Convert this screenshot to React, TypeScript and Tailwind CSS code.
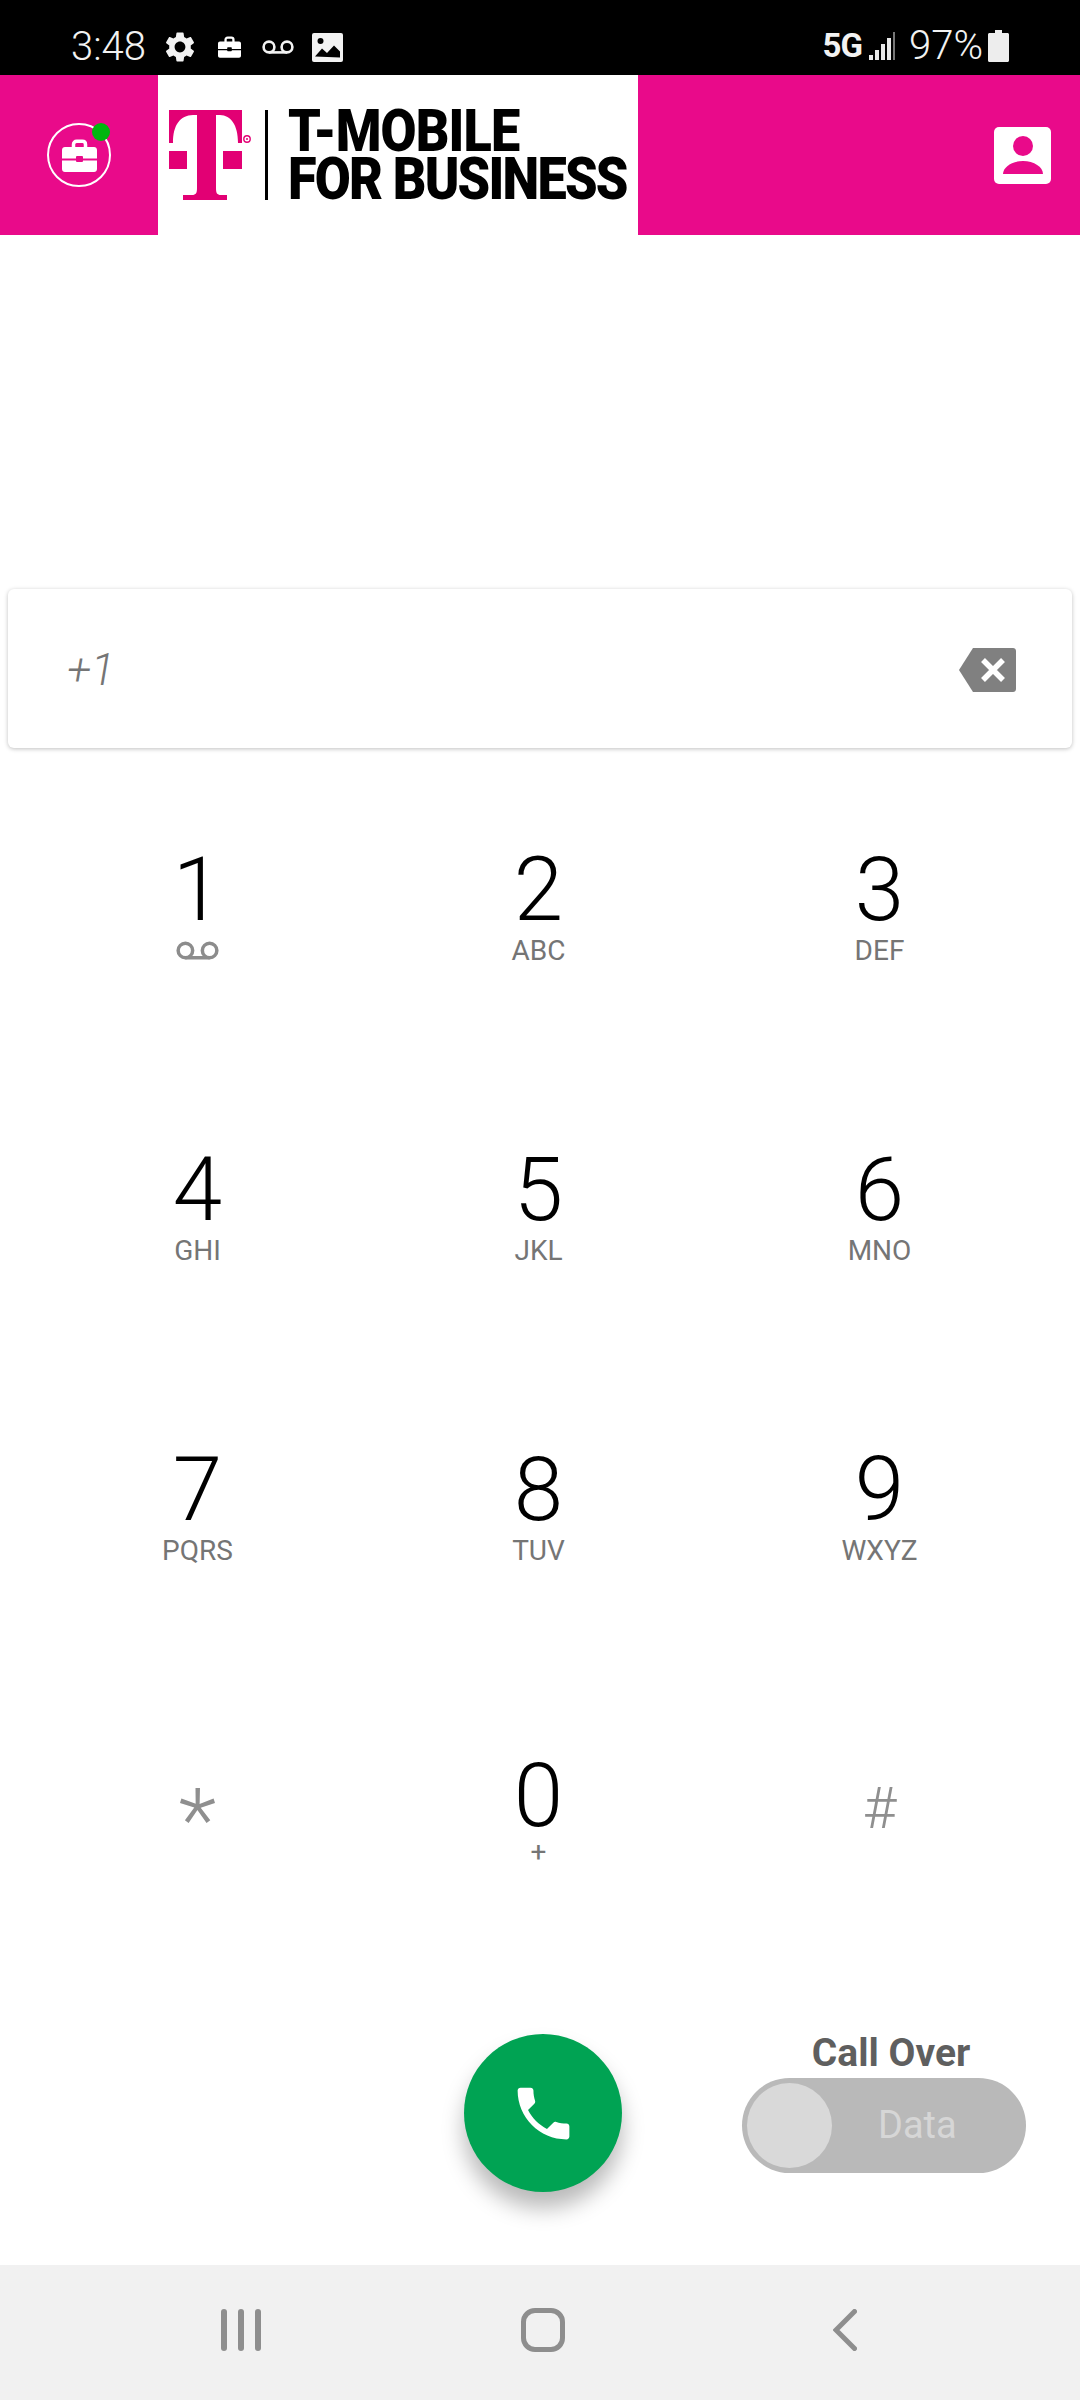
// App.tsx
const GRID_KEYS = [
  { digit: "1", sub: "" },
  { digit: "2", sub: "ABC" },
  { digit: "3", sub: "DEF" },
  { digit: "4", sub: "GHI" },
  { digit: "5", sub: "JKL" },
  { digit: "6", sub: "MNO" },
  { digit: "7", sub: "PQRS" },
  { digit: "8", sub: "TUV" },
  { digit: "9", sub: "WXYZ" },
];

const Voicemail = ({ className }: { className: string }) => (
  <svg viewBox="0 0 32 14" className={className} fill="none" stroke="currentColor" strokeWidth="2.6">
    <circle cx="7" cy="7" r="5.4" />
    <circle cx="25" cy="7" r="5.4" />
    <path d="M7 12.4h18" />
  </svg>
);

const Briefcase = ({ className, cut }: { className: string; cut: string }) => (
  <svg viewBox="0 0 35 33" className={className}>
    <path
      fill="none"
      stroke="#fff"
      strokeWidth="3.5"
      d="M11.5 9V5.5c0-2 1.2-3.2 3.2-3.2h5.6c2 0 3.2 1.2 3.2 3.2V9"
    />
    <path
      fill="#fff"
      d="M3 8h29c1.7 0 3 1.3 3 3v8.5H0V11c0-1.700 1.300-3 3-3zM0 21.500h35V30c0 1.700-1.300 3-3 3H3c-1.700 0-3-1.300-3-3z"
    />
    <rect x="14" y="17" width="7" height="6" rx="1" fill={cut} />
  </svg>
);

const StatusBar = () => (
  <div className="h-[75px] bg-black flex items-start justify-between pt-[29px] text-[#f2f2f2]">
    <div className="flex items-center pl-[71px]">
      <span className="text-[40px] leading-[34px] font-light w-[91px]">3:48</span>
      <svg viewBox="0 0 24 24" className="w-[36px] h-[36px]" fill="currentColor">
        <path d="M19.14 12.94c.04-.3.06-.61.06-.94 0-.32-.02-.64-.07-.94l2.03-1.58c.18-.14.23-.41.12-.61l-1.92-3.32c-.12-.22-.37-.29-.59-.22l-2.39.96c-.5-.38-1.03-.7-1.62-.94l-.36-2.54c-.04-.24-.24-.41-.48-.41h-3.84c-.24 0-.43.17-.47.41l-.36 2.54c-.59.24-1.13.57-1.62.94l-2.39-.96c-.22-.08-.47 0-.59.22L2.74 8.87c-.12.21-.08.47.12.61l2.03 1.58c-.05.3-.09.63-.09.94s.02.64.07.94l-2.03 1.58c-.18.14-.23.41-.12.61l1.92 3.32c.12.22.37.29.59.22l2.39-.96c.5.38 1.03.7 1.62.94l.36 2.54c.05.24.24.41.48.41h3.84c.24 0 .44-.17.47-.41l.36-2.54c.59-.24 1.13-.56 1.62-.94l2.39.96c.22.08.47 0 .59-.22l1.92-3.32c.12-.22.07-.47-.12-.61l-2.01-1.58zM12 15.6c-1.98 0-3.6-1.62-3.6-3.600s1.620-3.600 3.600-3.600 3.600 1.620 3.600 3.600-1.620 3.600-3.600 3.600z" />
      </svg>
      <Briefcase className="w-[23px] h-[22px] ml-[20px]" cut="#000" />
      <Voicemail className="w-[32px] h-[14px] ml-[21px]" />
      <svg viewBox="0 0 31 29" className="w-[31px] h-[29px] ml-[18px]">
        <rect width="31" height="29" rx="2" fill="#f2f2f2" />
        <circle cx="8.500" cy="8" r="3" fill="#000" />
        <path d="M3 23.500 10 15.500l5 4.500 7-7.500 6 6v6z" fill="#000" />
      </svg>
    </div>
    <div className="flex items-center pr-[71px]">
      <span className="text-[33px] leading-[30px] font-bold tracking-[-1px]">5G</span>
      <svg viewBox="0 0 26 28" className="w-[26px] h-[28px] ml-[7px]">
        <rect x="0" y="23" width="4" height="5" fill="#e8e8e8" />
        <rect x="6" y="18" width="4" height="10" fill="#e8e8e8" />
        <rect x="12" y="12" width="4" height="16" fill="#e8e8e8" />
        <rect x="18" y="6" width="4" height="22" fill="#e8e8e8" />
        <rect x="24" y="0" width="2" height="28" fill="#777" />
      </svg>
      <span className="text-[40px] leading-[34px] font-light ml-[14px]">97%</span>
      <svg viewBox="0 0 21 32" className="w-[21px] h-[32px] ml-[5px]">
        <path d="M7 0h7v3h5.500c.800 0 1.500.700 1.500 1.500V30.500c0 .800-.700 1.500-1.500 1.500H1.500C.700 32 0 31.300 0 30.500V4.500C0 3.700.700 3 1.500 3H7z" fill="#ededed" />
      </svg>
    </div>
  </div>
);

const Header = () => (
  <div className="h-[160px] bg-[#e90a8a] flex items-center justify-between">
    <div className="w-[158px] flex justify-center">
      <div className="relative w-[64px] h-[64px] rounded-full border-[2px] border-white flex items-center justify-center">
        <Briefcase className="w-[35px] h-[33px]" cut="#e90a8a" />
        <span className="absolute -top-[2px] right-[-1px] w-[18px] h-[18px] rounded-full bg-[#00b70f]" />
      </div>
    </div>
    <div className="w-[480px] h-[160px] bg-white flex items-center pl-[11px] mr-auto overflow-hidden">
      <svg viewBox="0 0 84 90" className="w-[84px] h-[90px] shrink-0">
        <path
          fill="#e20074"
          d="M0 0H73V33H69C69 15 62 5.500 51 5H47V78C47 83 48 85 52 85H58V90H14V85H23C27 85 28 83 28 78V5H24C11 5.500 4 15 4 33H0Z"
        />
        <rect x="0" y="41" width="18" height="18" fill="#e20074" />
        <rect x="54" y="41" width="19" height="18" fill="#e20074" />
        <circle cx="78" cy="29" r="3.200" fill="none" stroke="#e20074" strokeWidth="1.400" />
        <circle cx="78" cy="29" r="1" fill="#e20074" />
      </svg>
      <div className="w-[3px] h-[90px] bg-black ml-[12px] shrink-0" />
      <div className="ml-[20px] shrink-0 font-black text-[60px] leading-[48px] text-black whitespace-nowrap origin-left scale-x-[0.87] tracking-[-2px]">
        <div className="tracking-[-1px]">T-MOBILE</div>
        <div>FOR BUSINESS</div>
      </div>
    </div>
    <div className="pr-[29px]">
      <svg viewBox="0 0 57 57" className="w-[57px] h-[57px]">
        <rect width="57" height="57" rx="5" fill="#fff" />
        <circle cx="29" cy="19" r="10" fill="#e90a8a" />
        <path d="M9 47c0-7 9-13 20-13s20 6 20 13z" fill="#e90a8a" />
      </svg>
    </div>
  </div>
);

const Key = ({ digit, sub }: { digit: string; sub: string }) => (
  <div className="h-[300px] flex flex-col items-center">
    <span className="text-[89px] leading-[88px] font-light text-black">{digit}</span>
    {sub ? (
      <span className="text-[28px] leading-[32px] mt-[1px] text-[#757575]">{sub}</span>
    ) : (
      <Voicemail className="w-[43px] h-[19px] mt-[7px] text-[#8c8c8c]" />
    )}
  </div>
);

const Keypad = () => (
  <div className="grid grid-cols-3 w-[1023px] ml-[27px] mt-[98px]">
    {GRID_KEYS.map((k) => (
      <Key key={k.digit} digit={k.digit} sub={k.sub} />
    ))}
    <div className="h-[190px] flex flex-col items-center pt-[30px]">
      <span className="text-[88px] leading-[88px] font-light text-[#8f8f8f]">*</span>
    </div>
    <div className="h-[190px] flex flex-col items-center pt-[6px]">
      <span className="text-[89px] leading-[88px] font-light text-black">0</span>
      <span className="text-[28px] leading-[32px] -mt-[4px] text-[#757575]">+</span>
    </div>
    <div className="h-[190px] flex flex-col items-center pt-[18px]">
      <span className="text-[58px] leading-[88px] font-light text-[#8f8f8f]">#</span>
    </div>
  </div>
);

export default function App() {
  return (
    <div className="w-[1080px] h-[2400px] flex flex-col bg-white font-['Roboto',sans-serif] overflow-hidden">
      <StatusBar />
      <Header />
      <main className="flex-1 flex flex-col">
        <div className="mt-[354px] mx-[8px] h-[159px] rounded-[6px] bg-white shadow-[0_1px_4px_rgba(0,0,0,0.25)] flex items-center justify-between pl-[59px] pr-[56px]">
          <span className="text-[44px] italic font-light text-[#757575] mt-[2px]">+1</span>
          <svg viewBox="0 0 57 44" className="w-[57px] h-[44px] mt-[2px]">
            <path d="M14 0H54c1.700 0 3 1.300 3 3V41c0 1.700-1.300 3-3 3H14L0 22z" fill="#808080" />
            <path d="M24 12 44 32M44 12 24 32" stroke="#fff" strokeWidth="5.500" />
          </svg>
        </div>
        <Keypad />
        <div className="mt-auto pb-[73px] pl-[464px] flex items-end">
          <button className="w-[158px] h-[158px] rounded-full bg-[#00a353] shadow-[0_16px_22px_rgba(0,0,0,0.28)] flex items-center justify-center">
            <svg viewBox="0 0 24 24" className="w-[69px] h-[69px]" fill="#fff">
              <path d="M6.620 10.790c1.440 2.830 3.760 5.140 6.590 6.590l2.200-2.200c.270-.270.670-.360 1.020-.240 1.120.370 2.330.570 3.570.570.550 0 1 .450 1 1V20c0 .550-.450 1-1 1-9.390 0-17-7.610-17-17 0-.550.450-1 1-1h3.500c.550 0 1 .450 1 1 0 1.250.200 2.450.570 3.570.110.350.030.740-.250 1.020l-2.200 2.200z" />
            </svg>
          </button>
          <div className="ml-[120px] w-[284px] mb-[19px] flex flex-col items-center">
            <span className="text-[39px] leading-[44px] font-bold text-[#5f5f5f] ml-[14px] mb-[3px]">Call Over</span>
            <div className="w-[284px] h-[95px] rounded-full bg-[#b9b9b9] flex items-center pl-[5px]">
              <div className="w-[85px] h-[85px] rounded-full bg-[#d9d9d9]" />
              <span className="ml-[46px] text-[38px] text-[#d6d6d6]">Data</span>
            </div>
          </div>
        </div>
      </main>
      <nav className="h-[135px] bg-[#f1f1f1] flex items-center text-[#8e8e8e] pb-[6px] pl-[221px]">
        <svg viewBox="0 0 40 42" className="w-[40px] h-[42px]" fill="currentColor">
          <rect x="0" width="6" height="42" rx="3" />
          <rect x="17" width="6" height="42" rx="3" />
          <rect x="34" width="6" height="42" rx="3" />
        </svg>
        <div className="w-[44px] h-[44px] ml-[260px] rounded-[14px] border-[5px] border-[#8e8e8e]" />
        <svg viewBox="0 0 24 42" className="w-[24px] h-[42px] ml-[268px]" fill="none" stroke="currentColor" strokeWidth="5" strokeLinecap="round" strokeLinejoin="miter">
          <path d="M21.500 2.500 3 21l18.500 18.500" />
        </svg>
      </nav>
    </div>
  );
}
